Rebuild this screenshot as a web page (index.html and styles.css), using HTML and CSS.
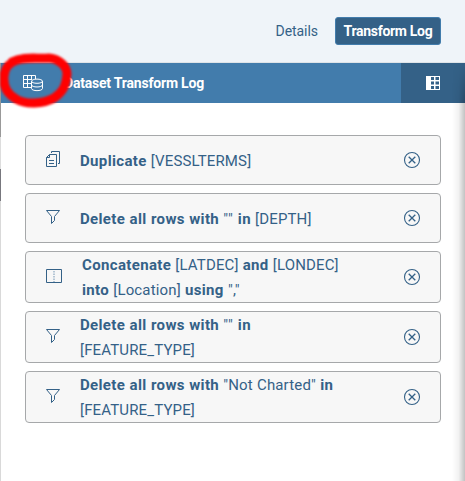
FILE: index.html
```html
<!DOCTYPE html>
<html lang="en">
<head>
<meta charset="utf-8">
<title>Dataset Transform Log</title>
<link rel="stylesheet" href="styles.css">
</head>
<body>
<svg class="symbols" width="0" height="0" aria-hidden="true">
  <symbol id="filter" viewBox="0 0 16 16"><path d="M.5 1.5H13.5L8.5 7.5V11.5L5.5 14.5V7.5Z" fill="none" stroke="currentColor"/></symbol>
  <symbol id="remove" viewBox="0 0 18 18"><circle cx="9" cy="9" r="7.5" fill="none" stroke="currentColor" stroke-width="1.1"/><path d="M5.7 5.7L12.3 12.3M12.3 5.7L5.7 12.3" stroke="currentColor" stroke-width="1.3"/></symbol>
</svg>
<div class="panel">
  <nav class="tabs">
    <button class="tab details">Details</button>
    <button class="tab active"><span>Transform Log</span></button>
  </nav>
  <header class="bar">
    <svg class="data-icon" width="22" height="18" viewBox="0 0 22 18" fill="none" stroke="#fff">
      <path d="M8 13.5H.5V1.5H12.5V5M.5 5.5H9M.5 9.5H8M4.5 1.5V13.5M8.5 1.5V6"/>
      <path d="M8.5 7.2V14.4C8.5 17.4 19.5 17.4 19.5 14.4V7.2M8.5 10.8C8.5 13.7 19.5 13.7 19.5 10.8"/>
      <ellipse cx="14" cy="7.2" rx="5.5" ry="2.1"/>
    </svg>
    <h1>Dataset Transform Log</h1>
    <button class="columns" aria-label="Columns"><svg width="14" height="14" viewBox="0 0 14 14"><path d="M0 0H14V14H0Z" fill="#fff"/><path d="M5 1h3v3H5zM9.5 1h3.5v3H9.5zM5 5.5h3v3H5zM9.5 5.5h3.5v3H9.5zM5 10h3v3H5zM9.5 10h3.5v3H9.5z" fill="#346187"/></svg></button>
  </header>
  <main class="log">
    <div class="edge"></div>
    <article class="entry">
      <svg class="icon copy" width="16" height="18" viewBox="0 0 16 18" fill="none" stroke="currentColor"><path d="M3.5 4.5H10.5V16.5H.5V7.5ZM.5 7.5H3.5V4.5M5.5 3V1.5H13.5V13.5H12M3 10.5H8M3 13.5H8"/></svg>
      <p><span class="line"><b>Duplicate</b> [VESSLTERMS]</span></p>
      <svg class="remove"><use href="#remove"/></svg>
    </article>
    <article class="entry">
      <svg class="icon"><use href="#filter"/></svg>
      <p><span class="line"><b>Delete all rows with</b> <span class="empty">""</span> <b>in</b> [DEPTH]</span></p>
      <svg class="remove"><use href="#remove"/></svg>
    </article>
    <article class="entry tall">
      <svg class="icon concat" width="16" height="14" viewBox="0 0 16 14" fill="none"><path d="M.5 .5H15.5V13.5H.5Z" stroke="currentColor"/><path d="M8 2V13" stroke="#9fb6ca" stroke-width="1.5" stroke-dasharray="1.5 1"/></svg>
      <p class="inset"><span class="line"><b>Concatenate</b> [LATDEC] <b>and</b> [LONDEC]</span><span class="line"><b>into</b> [Location] <b>using</b> ","</span></p>
      <svg class="remove"><use href="#remove"/></svg>
    </article>
    <article class="entry tall">
      <svg class="icon"><use href="#filter"/></svg>
      <p><span class="line"><b>Delete all rows with</b> <span class="empty">""</span> <b>in</b></span><span class="line">[FEATURE_TYPE]</span></p>
      <svg class="remove"><use href="#remove"/></svg>
    </article>
    <article class="entry tall">
      <svg class="icon"><use href="#filter"/></svg>
      <p><span class="line"><b>Delete all rows with</b> "Not Charted" <b>in</b></span><span class="line">[FEATURE_TYPE]</span></p>
      <svg class="remove"><use href="#remove"/></svg>
    </article>
  </main>
  <div class="shade"></div>
  <svg class="mark" width="90" height="80" viewBox="0 40 90 80" fill="none"><path d="M12 62C23 56 37 59 49 58C59 59 67 66 67 74C66 86 63 92 54 98C43 104 26 105 16 99C7 94 3 86 4 76C5 68 8 63 17 60" stroke="#f00" stroke-width="9" stroke-linecap="round"/></svg>
</div>
</body>
</html>
```
FILE: styles.css
```css
* { box-sizing: border-box; }
body { margin: 0; background: #fff; color: #346187; font-family: Roboto, "Liberation Sans", sans-serif; font-size: 15px; }
button { border: 0; padding: 0; background: none; color: inherit; font: inherit; }
.symbols { position: absolute; }
.panel { position: relative; height: 481px; overflow: hidden; }
.tabs { height: 63px; padding: 17px 24px 0 0; display: flex; justify-content: flex-end; align-items: flex-start; gap: 17px; background: #eff4f9; border-bottom: 1px solid #dfe4e8; }
.tab { height: 28px; font-size: 14px; white-space: nowrap; }
.details { letter-spacing: -.05px; }
.active { width: 106px; border: 1px solid #427cac; border-radius: 3px; background: #346187; color: #fff; font-weight: 700; letter-spacing: -.3px; }
.bar { height: 40px; margin-left: 1px; display: flex; align-items: center; background: #427cac; color: #fff; }
.data-icon { margin-left: 22px; flex: none; }
h1 { margin: 0 0 0 19px; flex: 1; font-size: 14px; font-weight: 700; letter-spacing: -.2px; white-space: nowrap; }
.columns { width: 64px; height: 40px; display: grid; place-items: center; background: #346187; }
.log { position: relative; height: 378px; padding: 32px 24px 0 25px; display: flex; flex-direction: column; gap: 8px; }
.edge { position: absolute; left: 0; top: -40px; bottom: 0; width: 1px; background: linear-gradient(#999 0 74px, #ddd 74px 106px, #77777d 106px 138px, #d9d9d9 138px); }
.entry { flex: none; height: 50px; padding: 0 19px 0 20px; display: flex; align-items: center; border: 1px solid #a6a8aa; border-radius: 4px; background: #f7f7f7; }
.tall { height: 52px; }
.icon { width: 16px; height: 16px; margin: -2px 18px 0 0; flex: none; }
.copy { height: 18px; }
.concat { height: 14px; }
p { margin: 2px 0 0; flex: 1; line-height: 25px; }
.inset { padding-left: 2px; }
.line { display: block; width: max-content; white-space: nowrap; letter-spacing: .15px; word-spacing: .3px; }
.line b { letter-spacing: .35px; }
.empty { letter-spacing: .8px; }
.remove { width: 18px; height: 18px; flex: none; }
.shade { position: absolute; top: 63px; right: 0; bottom: 0; width: 13px; background: linear-gradient(to right, transparent, rgba(0,0,0,.05) 50%, rgba(0,0,0,.24)); -webkit-mask-image: linear-gradient(transparent, #000 40px); mask-image: linear-gradient(transparent, #000 40px); }
.mark { position: absolute; left: 0; top: 40px; filter: blur(.8px); }
```
